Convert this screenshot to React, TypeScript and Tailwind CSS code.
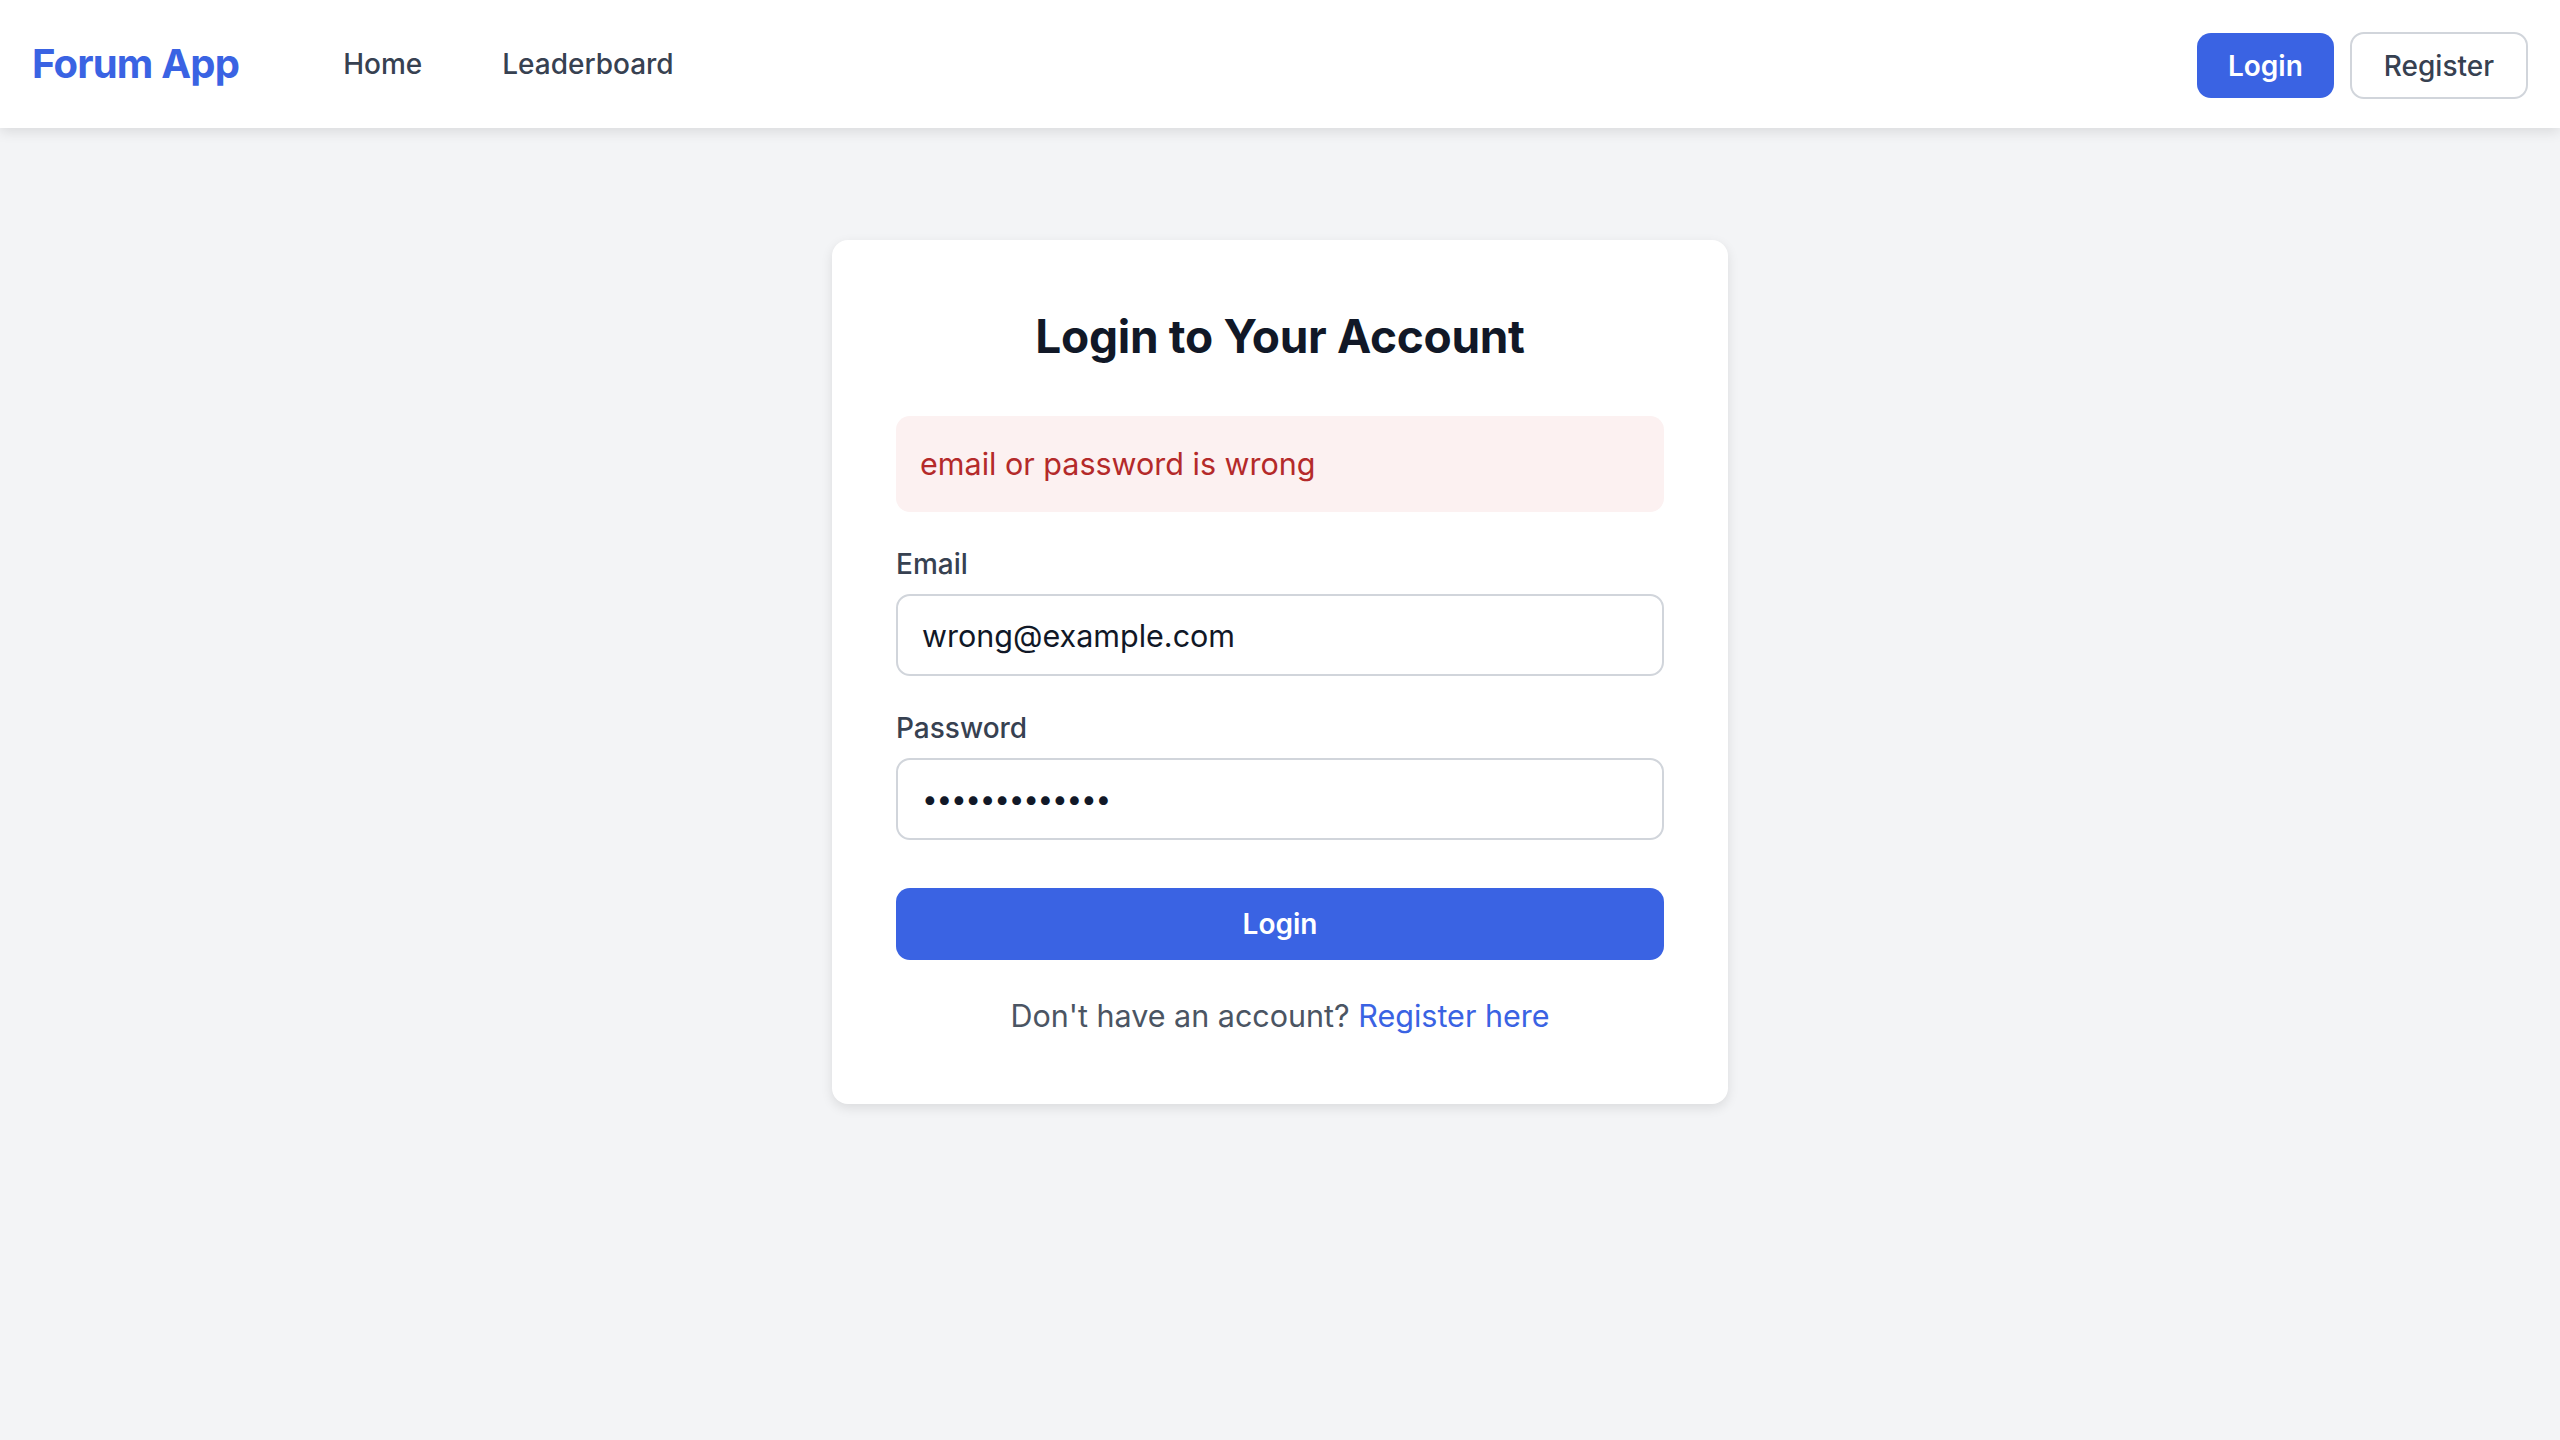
import React, { useState } from 'react';

export default function App() {
  const [email, setEmail] = useState('wrong@example.com');
  const [password, setPassword] = useState('wrongpassword');

  return (
    <div className="min-h-screen bg-[#f3f4f6] font-['Inter',sans-serif]">
      <nav className="h-[128px] bg-white shadow-[0_4px_12px_rgba(0,0,0,0.1)] px-8 flex items-center justify-between relative z-10">
        <div className="flex items-center">
          <span className="text-[40px] font-bold text-[#3a63e3] tracking-[-0.8px]">Forum App</span>
          <div className="flex items-center gap-[80px] ml-[104px] text-[28px] text-[#374151] font-medium">
            <a href="#">Home</a>
            <a href="#">Leaderboard</a>
          </div>
        </div>
        <div className="flex items-center gap-4 mt-[3px]">
          <button className="h-[65px] px-[31px] rounded-[14px] bg-[#3a63e3] text-white text-[28px] font-semibold">
            Login
          </button>
          <button className="h-[67px] px-8 rounded-[14px] border-2 border-[#d1d5db] bg-white text-[#374151] text-[28px] font-medium">
            Register
          </button>
        </div>
      </nav>

      <main className="flex justify-center pt-[112px]">
        <div className="w-[896px] bg-white rounded-2xl shadow-[0_4px_12px_rgba(0,0,0,0.1)] p-16">
          <h1 className="text-[46px] leading-[64px] font-bold text-[#111827] text-center mb-12 tracking-[-0.3px]">
            Login to Your Account
          </h1>

          <div className="h-[96px] px-6 flex items-center rounded-[14px] bg-[#fcf1f1] text-[#b42a2a] text-[30.5px] mb-8">
            email or password is wrong
          </div>

          <form onSubmit={(e) => e.preventDefault()}>
            <label className="block text-[28px] leading-[40px] font-medium text-[#374151] mb-[10px]">Email</label>
            <input
              type="email"
              value={email}
              onChange={(e) => setEmail(e.target.value)}
              className="w-full h-[82px] px-6 border-2 border-[#d1d5db] rounded-[14px] text-[30.5px] text-[#111827] outline-none mb-8"
            />

            <label className="block text-[28px] leading-[40px] font-medium text-[#374151] mb-[10px]">Password</label>
            <input
              type="password"
              value={password}
              onChange={(e) => setPassword(e.target.value)}
              className="w-full h-[82px] px-6 border-2 border-[#d1d5db] rounded-[14px] text-[28px] tracking-[-1.3px] text-[#111827] outline-none mb-12"
            />

            <button type="submit" className="w-full h-[72px] rounded-[14px] bg-[#3a63e3] text-white text-[28px] font-semibold">
              Login
            </button>
          </form>

          <p className="mt-8 text-center text-[30.5px] leading-[48px] text-[#4b5563]">
            Don't have an account? <a href="#" className="text-[#3a63e3]">Register here</a>
          </p>
        </div>
      </main>
    </div>
  );
}
